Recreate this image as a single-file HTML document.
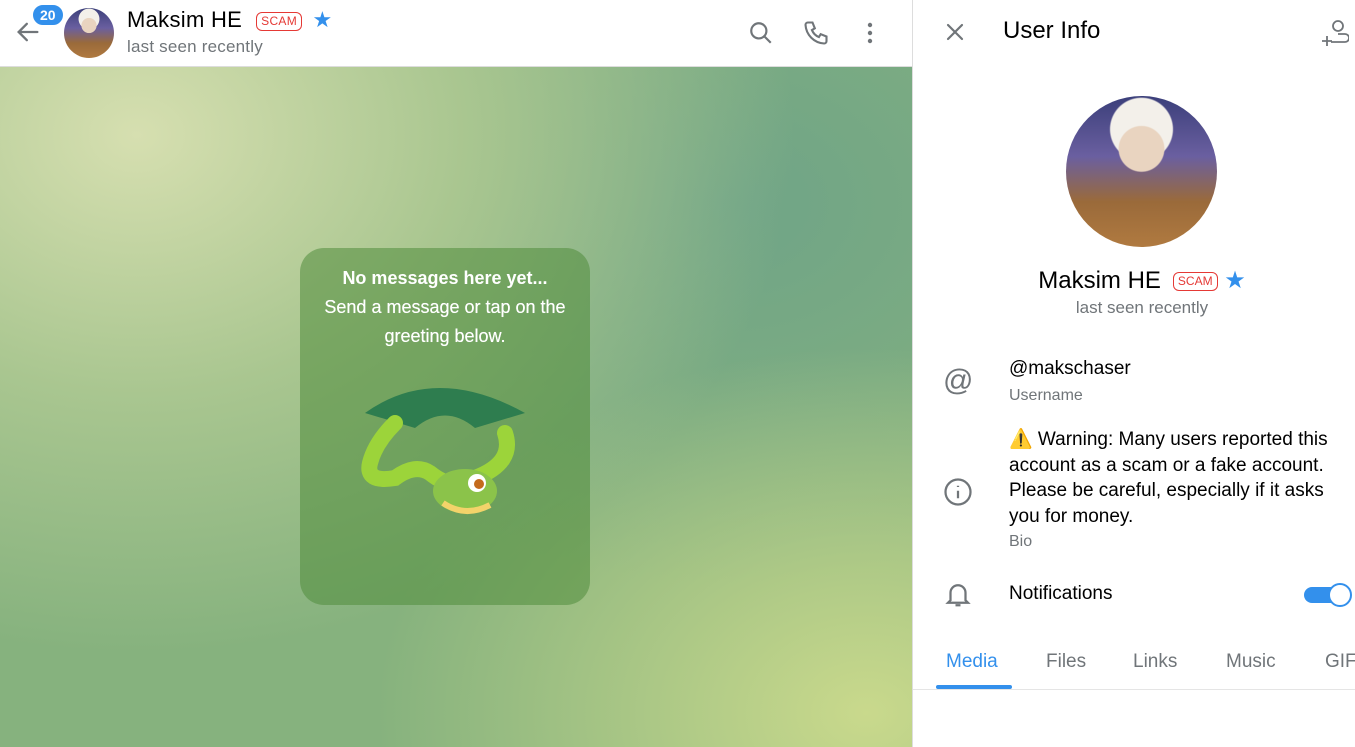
<!DOCTYPE html>
<html><head><meta charset="utf-8"><style>
*{margin:0;padding:0;box-sizing:border-box}
body{width:1355px;height:747px;overflow:hidden;font-family:"Liberation Sans",sans-serif;position:relative;background:#fff}
.chat{position:absolute;left:0;top:0;width:912px;height:747px}
.hdr{position:absolute;left:0;top:0;width:912px;height:67px;background:#fff;border-bottom:1px solid #ddd}
.bg{position:absolute;left:0;top:67px;width:912px;height:680px;background:radial-gradient(ellipse at 15% 10%,#d6dfb0 0%,#a9c690 30%,transparent 60%),radial-gradient(ellipse at 95% 95%,#c9d98c 0%,transparent 40%),radial-gradient(ellipse at 80% 20%,#6fa487 0%,transparent 50%),#86b27e}
.side{position:absolute;left:912px;top:0;width:443px;height:747px;background:#fff;border-left:1px solid #ddd}
.scam{display:inline-block;border:1px solid #e53935;color:#e53935;border-radius:6px;font-size:12px;padding:1px 4px;vertical-align:middle;line-height:15px;margin-left:6px}
.av{border-radius:50%;background:radial-gradient(circle at 50% 35%,#e9d4c0 0 18%,transparent 19%),radial-gradient(circle at 50% 22%,#f3f0ea 0 22%,transparent 23%),linear-gradient(180deg,#3b3f7a 0%,#6a5fa0 40%,#9a6a3a 70%,#b07a40 100%)}
.ic{position:absolute;color:#707579}
.lbl{color:#707579;font-size:16px}
</style></head><body>
<div class="chat">
 <div class="bg"></div>
 <div class="hdr">
  <svg class="ic" style="left:14px;top:18px" width="28" height="28" viewBox="0 0 24 24" fill="none" stroke="#707579" stroke-width="2" stroke-linecap="round"><path d="M20 12H5M11 5l-7 7 7 7"/></svg>
  <div style="position:absolute;left:31px;top:3px;background:#3390ec;color:#fff;border-radius:12px;font-size:14px;font-weight:bold;padding:2px 7px;border:2px solid #fff">20</div>
  <div class="av" style="position:absolute;left:64px;top:8px;width:50px;height:50px"></div>
  <div style="position:absolute;left:127px;top:7px;font-size:22px;color:#000;letter-spacing:.3px">Maksim HE<span class="scam" style="margin-left:14px">SCAM</span> <span style="color:#3390ec;margin-left:4px">★</span></div>
  <div style="position:absolute;left:127px;top:37px;font-size:17px;color:#707579;letter-spacing:.2px">last seen recently</div>
  <svg style="position:absolute;left:748px;top:20px" width="26" height="26" viewBox="0 0 24 24" fill="none" stroke="#707579" stroke-width="2"><circle cx="10" cy="10" r="7"/><path d="M15 15l6 6"/></svg>
  <svg style="position:absolute;left:802px;top:19px" width="28" height="28" viewBox="0 0 24 24" fill="none" stroke="#707579" stroke-width="1.8"><path d="M5 3h4l2 5-2.5 1.5a11 11 0 0 0 6 6L16 13l5 2v4a2 2 0 0 1-2 2A17 17 0 0 1 3 5a2 2 0 0 1 2-2z"/></svg>
  <svg style="position:absolute;left:858px;top:20px" width="24" height="26" viewBox="0 0 24 26" fill="#707579"><circle cx="12" cy="5" r="2.2"/><circle cx="12" cy="13" r="2.2"/><circle cx="12" cy="21" r="2.2"/></svg>
 </div>
 <div style="position:absolute;left:300px;top:248px;width:290px;height:357px;background:rgba(80,140,60,.55);border-radius:24px;color:#fff;text-align:center;font-size:18px;line-height:29px;padding-top:16px;font-weight:bold">
  No messages here yet...<br><span style="font-weight:normal;text-shadow:0 0 .4px #fff">Send a message or tap on the<br>greeting below.</span>
  <svg style="position:absolute;left:55px;top:125px" width="175" height="150" viewBox="0 0 175 150"><path d="M10 40 Q80 -10 170 40 L120 55 Q90 30 60 55Z" fill="#2e7d4f"/><path d="M40 50 Q20 70 15 90 Q10 110 40 105 Q60 90 75 100 Q100 120 120 105 Q160 90 150 60" fill="none" stroke="#9cd43a" stroke-width="16" stroke-linecap="round"/><ellipse cx="110" cy="118" rx="32" ry="22" fill="#8bc34a"/><circle cx="122" cy="110" r="9" fill="#fff"/><circle cx="124" cy="111" r="5" fill="#c46a1c"/><path d="M88 130 Q110 145 135 132" stroke="#f3d36a" stroke-width="6" fill="none"/></svg>
 </div>
</div>
<div class="side">
 <svg style="position:absolute;left:30px;top:20px" width="24" height="24" viewBox="0 0 24 24" stroke="#707579" stroke-width="2.2" stroke-linecap="round"><path d="M5 5l14 14M19 5L5 19"/></svg>
 <div style="position:absolute;left:90px;top:17px;font-size:24px;color:#000">User Info</div>
 <svg style="position:absolute;left:408px;top:18px" width="28" height="30" viewBox="0 0 28 30" fill="none" stroke="#707579" stroke-width="1.8"><circle cx="17" cy="8" r="5"/><path d="M10 24h14a3 3 0 0 0 0-8h-7M6 18v10M1 23h10"/></svg>
 <div class="av" style="position:absolute;left:153px;top:96px;width:151px;height:151px"></div>
 <div style="position:absolute;left:0;width:458px;top:266px;text-align:center;font-size:24px;color:#000">Maksim HE<span class="scam" style="margin-left:12px">SCAM</span> <span style="color:#3390ec">★</span></div>
 <div style="position:absolute;left:0;width:458px;top:298px;text-align:center;font-size:17px;color:#707579">last seen recently</div>
 <div class="ic" style="left:30px;top:364px;font-size:30px">@</div>
 <div style="position:absolute;left:96px;top:358px;font-size:19px">@makschaser</div>
 <div class="lbl" style="position:absolute;left:96px;top:387px">Username</div>
 <svg style="position:absolute;left:30px;top:477px" width="30" height="30" viewBox="0 0 24 24" fill="none" stroke="#707579" stroke-width="1.8"><circle cx="12" cy="12" r="10"/><path d="M12 11v6M12 7v1"/></svg>
 <div style="position:absolute;left:96px;top:427px;width:340px;font-size:19px;line-height:25.5px">⚠️ Warning: Many users reported this account as a scam or a fake account. Please be careful, especially if it asks you for money.</div>
 <div class="lbl" style="position:absolute;left:96px;top:533px">Bio</div>
 <svg style="position:absolute;left:30px;top:579px" width="30" height="30" viewBox="0 0 24 24" fill="none" stroke="#707579" stroke-width="1.8"><path d="M6 17V11a6 6 0 0 1 12 0v6l2 2H4zM10 21h4"/></svg>
 <div style="position:absolute;left:96px;top:583px;font-size:19px">Notifications</div>
 <div style="position:absolute;left:391px;top:587px;width:44px;height:16px;border-radius:8px;background:#3390ec"></div>
 <div style="position:absolute;left:415px;top:583px;width:24px;height:24px;border-radius:50%;background:#fff;border:2px solid #3390ec"></div>
 <div style="position:absolute;left:0;top:651px;font-size:19px;color:#707579;white-space:nowrap">
  <span style="position:absolute;left:33px;color:#3390ec">Media</span><span style="position:absolute;left:133px">Files</span><span style="position:absolute;left:220px">Links</span><span style="position:absolute;left:313px">Music</span><span style="position:absolute;left:412px">GIFs</span>
 </div>
 <div style="position:absolute;left:23px;top:685px;width:76px;height:4px;background:#3390ec;border-radius:2px"></div>
 <div style="position:absolute;left:0;top:689px;width:443px;height:1px;background:#e5e5e5"></div>
</div>
</body></html>
